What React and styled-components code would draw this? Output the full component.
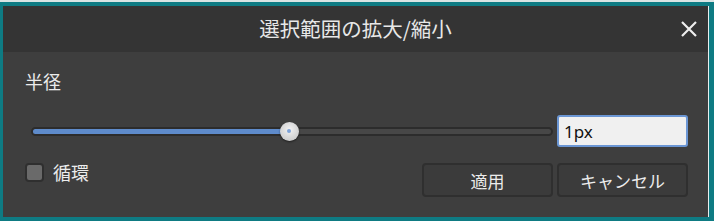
import styled, { createGlobalStyle } from "styled-components";

const GlobalStyle = createGlobalStyle`
  html, body {
    margin: 0;
    padding: 0;
    background: #0e7b83;
    width: 714px;
    height: 221px;
    overflow: hidden;
  }
  * { box-sizing: border-box; }
`;

const Frame = styled.div`
  width: 714px;
  height: 221px;
  border-top: 2px solid #d9e4e4;
  padding: 4px 5px 4px 3px;
  display: flex;
  font-family: "Noto Sans CJK JP", "Noto Sans", sans-serif;
`;

const Dialog = styled.div`
  flex: 1;
  display: flex;
  flex-direction: column;
  background: #3e3e3e;
  border-right: 1px solid #e8eeee;
`;

const TitleBar = styled.div`
  height: 46px;
  background: #343434;
  display: flex;
  align-items: center;
  justify-content: center;
  position: relative;
  color: #e8e8e8;
  font-size: 20.5px;
  padding-bottom: 2px;
`;

const Close = styled.button`
  position: absolute;
  right: 10px;
  top: 14px;
  width: 18px;
  height: 18px;
  padding: 0;
  border: none;
  background: none;
`;

const Body = styled.div`
  flex: 1;
  padding: 17px 20px 0 22px;
  display: flex;
  flex-direction: column;
`;

const Label = styled.div`
  color: #ececec;
  font-size: 18px;
  line-height: 24px;
`;

const SliderRow = styled.div`
  margin-top: 22px;
  display: flex;
  align-items: center;
  gap: 4px;
`;

const Track = styled.div`
  flex: 1;
  height: 9px;
  margin-left: 6px;
  border-radius: 5px;
  background: #474747;
  border: 2px solid #2c2c2c;
  position: relative;
`;

const Fill = styled.div`
  height: 100%;
  border-radius: 3px;
  background: #5e8bcb;
`;

const Thumb = styled.div`
  position: absolute;
  top: 50%;
  width: 19px;
  height: 19px;
  margin: -9.5px 0 0 -9.5px;
  border-radius: 50%;
  background: radial-gradient(circle at 50% 40%, #f2f2f2, #cfcfcf 70%, #b9b9b9);
  box-shadow: 0 1px 2px rgba(0, 0, 0, 0.5);
  display: flex;
  align-items: center;
  justify-content: center;
  &::after {
    content: "";
    width: 4px;
    height: 4px;
    border-radius: 50%;
    background: #7ea2d6;
  }
`;

const Input = styled.div`
  width: 131px;
  height: 32px;
  border: 2px solid #6b96d4;
  border-radius: 3px;
  background: #f0f0f0;
  color: #111;
  font-family: "Noto Sans", sans-serif;
  font-size: 17px;
  display: flex;
  align-items: center;
  padding-left: 5px;
`;

const BottomRow = styled.div`
  margin-top: 12px;
  display: flex;
  align-items: flex-start;
`;

const Check = styled.label`
  display: flex;
  align-items: center;
  gap: 9px;
  color: #ececec;
  font-size: 18px;
`;

const Box = styled.span`
  width: 19px;
  height: 19px;
  border-radius: 4px;
  background: #6a6a6a;
  border: 2px solid #2f2f2f;
`;

const Buttons = styled.div`
  margin-left: auto;
  display: flex;
  gap: 4px;
  margin-top: 4px;
`;

const Button = styled.button`
  width: 131px;
  height: 34px;
  border-radius: 4px;
  border: 2px solid #2f2f2f;
  background: #3b3b3b;
  color: #ececec;
  font-family: "Noto Sans CJK JP", sans-serif;
  font-size: 17px;
  display: flex;
  align-items: center;
  justify-content: center;
`;

export default function App() {
  const value = 49.5;
  return (
    <>
      <GlobalStyle />
      <Frame>
        <Dialog>
          <TitleBar>
            選択範囲の拡大/縮小
            <Close>
              <svg width="18" height="18" viewBox="0 0 18 18">
                <path d="M2 2 L16 16 M16 2 L2 16" stroke="#eeeeee" strokeWidth="2.2" />
              </svg>
            </Close>
          </TitleBar>
          <Body>
            <Label>半径</Label>
            <SliderRow>
              <Track>
                <Fill style={{ width: `${value}%` }} />
                <Thumb style={{ left: `${value}%` }} />
              </Track>
              <Input>1px</Input>
            </SliderRow>
            <BottomRow>
              <Check>
                <Box />
                循環
              </Check>
              <Buttons>
                <Button>適用</Button>
                <Button>キャンセル</Button>
              </Buttons>
            </BottomRow>
          </Body>
        </Dialog>
      </Frame>
    </>
  );
}
